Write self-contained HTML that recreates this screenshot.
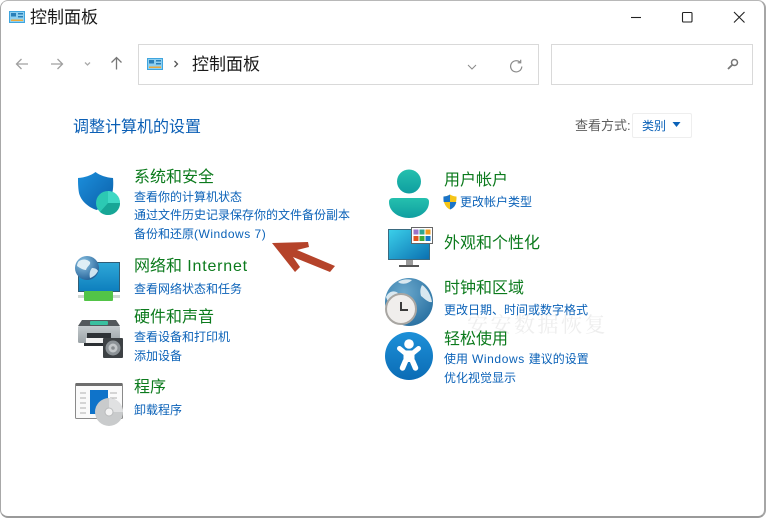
<!DOCTYPE html>
<html lang="zh-CN"><head><meta charset="utf-8"><title>控制面板</title>
<style>
html,body{margin:0;padding:0;width:766px;height:518px;overflow:hidden;background:#fff}
body{font-family:"Liberation Sans","Noto Sans CJK SC",sans-serif}
#w{position:absolute;left:0;top:0;width:763px;height:515px;background:#fff;border:1px solid #a8a8a8;border-top-color:#b8b8b8;border-bottom:2px solid #9a9a9a;border-right:2px solid #a6a6a6;border-radius:8px;overflow:hidden}
.t{position:absolute;white-space:nowrap;line-height:20px;height:20px}
.h{font-size:16px;color:#0b7a1c}
.l{font-size:12px;color:#0b62b8}
.s{letter-spacing:.5px}
.i{letter-spacing:.8px}
.m{letter-spacing:.6px}
.box{position:absolute;border:1px solid #d9d9d9;box-sizing:border-box;background:#fff}
svg{position:absolute;overflow:visible}
</style></head><body>
<div id="w"></div>

<svg style="left:9px;top:11px" width="16" height="12" viewBox="0 0 16 12"><rect x=".5" y=".5" width="15" height="11" fill="#8fd0f0" stroke="#3fa5de"/><rect x="2" y="2" width="5" height="3.500" fill="#2a7fb8"/><rect x="9" y="2" width="5" height="1.500" fill="#2a7fb8"/><rect x="9" y="5" width="5" height="1.500" fill="#2a7fb8"/><rect x="2" y="8.500" width="12" height="1.500" fill="#e8a93c"/></svg>
<div class="t" style="left:30px;top:8px;font-size:17px;color:#1a1a1a">控制面板</div>

<svg style="left:0;top:0" width="766" height="34" fill="none" stroke="#222" stroke-width="1.100"><path d="M631 17.500H641"/><rect x="682.500" y="12.500" width="9.500" height="9.500" rx="1"/><path d="M734 12L744.500 22.500M744.500 12L734 22.500"/></svg>

<svg style="left:0;top:50px" width="130" height="28" fill="none" stroke="#a0a0a0" stroke-width="1.300"><path d="M28 14H16.500M21.500 9L16.500 14L21.500 19"/><path d="M51 14H62.500M57.500 9L62.500 14L57.500 19"/><path d="M85 12.500L87.500 15L90 12.500" stroke="#aaa"/><path d="M116.500 19.500V7.500M111.500 12.500L116.500 7.500L121.500 12.500" stroke="#777"/></svg>

<div class="box" style="left:138px;top:44px;width:401px;height:41px"></div>
<svg style="left:147px;top:58px" width="16" height="12" viewBox="0 0 16 12"><rect x=".5" y=".5" width="15" height="11" fill="#8fd0f0" stroke="#3fa5de"/><rect x="2" y="2" width="5" height="3.500" fill="#2a7fb8"/><rect x="9" y="2" width="5" height="1.500" fill="#2a7fb8"/><rect x="9" y="5" width="5" height="1.500" fill="#2a7fb8"/><rect x="2" y="8.500" width="12" height="1.500" fill="#e8a93c"/></svg>
<svg style="left:172px;top:58px" width="8" height="12" fill="none" stroke="#555" stroke-width="1.300"><path d="M2.500 3L5.500 6L2.500 9"/></svg>
<div class="t" style="left:192px;top:55px;font-size:17px;color:#1a1a1a">控制面板</div>
<svg style="left:466px;top:62px" width="12" height="12" fill="none" stroke="#8a8a8a"><path d="M2 3L6 7L10 3"/></svg>
<svg style="left:509px;top:59px" width="14" height="14" fill="none" stroke="#8a8a8a" stroke-width="1.200"><path d="M11 3.200A5.600 5.600 0 1 0 12.800 7.500"/><path d="M11.700 .8V3.800H8.700"/></svg>

<div class="box" style="left:551px;top:44px;width:202px;height:41px"></div>
<svg style="left:726px;top:57px" width="14" height="14" fill="none" stroke="#777" stroke-width="1.500"><circle cx="8.500" cy="5.500" r="3"/><path d="M6.300 7.700L2 12" stroke-width="1.800"/></svg>

<div class="t" style="left:73px;top:118px;font-size:16px;color:#0b5fb5">调整计算机的设置</div>
<div class="t" style="left:575px;top:116px;font-size:13px;color:#5c5c5c">查看方式:</div>
<div class="box" style="left:632px;top:113px;width:60px;height:25px;border-color:#eeeeee;border-radius:2px"></div>
<div class="t" style="left:642px;top:116px;font-size:12px;color:#0b62b8">类别</div>
<svg style="left:672px;top:122px" width="10" height="6"><path d="M.5 0H8.500L4.500 5Z" fill="#0b62b8"/></svg>

<!-- security -->
<svg style="left:76px;top:171px" width="46" height="46" viewBox="0 0 46 46"><defs><linearGradient id="sh" x1="0" y1="0" x2="1" y2="1"><stop offset="0" stop-color="#1c8fdc"/><stop offset="1" stop-color="#0b5fa8"/></linearGradient></defs><path d="M19.500 1C24 4.500 30 6.500 37 7C37.500 12 37.500 20 35 27C32 33 26 37 20.500 39C12 36 5 30 3 22C2 16 2 11 2 7C9 6.500 15 4.500 19.500 1Z" fill="url(#sh)"/><circle cx="32" cy="32" r="12" fill="#2cc9b3"/><path d="M32 20A12 12 0 0 1 44 32H32Z" fill="#3fd8c4"/><path d="M32 32H44A12 12 0 0 1 24 41Z" fill="#17a696"/></svg>
<div class="t h" style="left:134px;top:168px">系统和安全</div>
<div class="t l" style="left:134px;top:187px">查看你的计算机状态</div>
<div class="t l" style="left:134px;top:205px">通过文件历史记录保存你的文件备份副本</div>
<div class="t l" style="left:134px;top:224px">备份和还原<span class="s">(Windows 7)</span></div>

<!-- arrow -->
<svg style="left:0;top:0" width="766" height="518"><path d="M272 243L308 242L309 247L297 250L335 266L330 272L293 257L300 267L295 272Z" fill="#b5432a"/></svg>

<!-- network -->
<svg style="left:74px;top:255px" width="48" height="48" viewBox="0 0 48 48"><defs><linearGradient id="sc" x1="0" y1="0" x2="0" y2="1"><stop offset="0" stop-color="#2fa8d8"/><stop offset="1" stop-color="#0d7ebd"/></linearGradient><radialGradient id="gl" cx=".35" cy=".3" r=".8"><stop offset="0" stop-color="#8fc6e6"/><stop offset="1" stop-color="#1c5a92"/></radialGradient></defs><rect x="4.500" y="7.500" width="41" height="29" fill="url(#sc)" stroke="#2f5d76"/><rect x="4" y="40" width="42" height="3" fill="#d0d8d4"/><rect x="10" y="36" width="29" height="10" rx="1" fill="#52c447"/><circle cx="13" cy="13" r="12" fill="url(#gl)"/><path d="M5 6C10 3 14 5 16 7C17 10 13 11 12 15C9 15 6 13 3 11C3 9 4 7 5 6Z" fill="#dfeef6"/><path d="M18 13C21 13 23 14 24 16C22 20 19 22 16 23C15 19 16 15 18 13Z" fill="#cfe4f0"/></svg>
<div class="t h" style="left:134px;top:257px">网络和<span class="i"> Internet</span></div>
<div class="t l" style="left:134px;top:279px">查看网络状态和任务</div>

<!-- hardware -->
<svg style="left:76px;top:318px" width="48" height="42" viewBox="0 0 48 42"><defs><linearGradient id="pr" x1="0" y1="0" x2="0" y2="1"><stop offset="0" stop-color="#c4cacd"/><stop offset="1" stop-color="#9aa2a6"/></linearGradient></defs><path d="M6 2H40L44 8H2Z" fill="#53585c"/><rect x="14" y="3" width="18" height="4" rx="1" fill="#39c0a0"/><rect x="2" y="8" width="42" height="17" rx="1.500" fill="url(#pr)"/><rect x="11" y="15" width="24" height="5" fill="#2e3236"/><rect x="10" y="20" width="26" height="5" fill="#f2f2f2"/><rect x="8" y="25" width="22" height="3" fill="#2b2f33"/><rect x="27" y="20" width="20" height="20" rx="1" fill="#3d4144"/><circle cx="37" cy="30" r="7.500" fill="#8c9296"/><circle cx="37" cy="30" r="4.500" fill="#c3c7c9"/><circle cx="37" cy="30" r="1.800" fill="#888d90"/></svg>
<div class="t h" style="left:134px;top:308px">硬件和声音</div>
<div class="t l" style="left:134px;top:327px">查看设备和打印机</div>
<div class="t l" style="left:134px;top:346px">添加设备</div>

<!-- programs -->
<svg style="left:74px;top:382px" width="50" height="44" viewBox="0 0 50 44"><rect x="1.500" y="1.500" width="47" height="35" rx="1" fill="#fafafa" stroke="#8a8a8a"/><rect x="2" y="1" width="46" height="3" fill="#6d6d6d"/><g stroke="#b0b0b0"><path d="M6 11H12M6 16H12M6 21H12M6 26H12M6 31H12M36 11H43M36 16H43"/></g><rect x="16" y="8" width="18" height="24" fill="#0f73c9"/><circle cx="35" cy="30" r="14" fill="#c9cbcc"/><path d="M35 16A14 14 0 0 1 49 30H35Z" fill="#e0e1e2"/><circle cx="35" cy="30" r="4" fill="#f4f4f4" stroke="#b9bbbc"/></svg>
<div class="t h" style="left:134px;top:378px">程序</div>
<div class="t l" style="left:134px;top:400px">卸载程序</div>

<!-- user -->
<svg style="left:388px;top:168px" width="44" height="50" viewBox="0 0 44 50"><defs><linearGradient id="us" x1="0" y1="0" x2="0" y2="1"><stop offset="0" stop-color="#25c0ae"/><stop offset="1" stop-color="#0f9ea0"/></linearGradient></defs><circle cx="21" cy="13.500" r="12" fill="url(#us)"/><path d="M5 30H37Q41 30 41 34C41 44 31 50 21 50C11 50 1 44 1 34Q1 30 5 30Z" fill="url(#us)"/></svg>
<div class="t h" style="left:444px;top:171px">用户帐户</div>
<svg style="left:443px;top:194px" width="14" height="16" viewBox="0 0 14 16"><path d="M7 .5C9 1.800 11.500 2.500 13.500 2.500C13.800 8 12 13 7 15.500C2 13 .2 8 .5 2.500C2.500 2.500 5 1.800 7 .5Z" fill="#f5c518"/><path d="M7 .5V8H.7C.4 6 .4 4 .5 2.500C2.500 2.500 5 1.800 7 .5Z" fill="#1a74c9"/><path d="M7 8H13.300C12.700 11 11 14 7 15.500Z" fill="#1a74c9"/></svg>
<div class="t l" style="left:460px;top:192px">更改帐户类型</div>

<!-- appearance -->
<svg style="left:388px;top:226px" width="46" height="44" viewBox="0 0 46 44"><defs><linearGradient id="mo" x1="0" y1="0" x2="1" y2="1"><stop offset="0" stop-color="#3bd0ea"/><stop offset="1" stop-color="#0a6fb0"/></linearGradient></defs><rect x=".5" y="3.500" width="41" height="30" fill="url(#mo)" stroke="#3a6a80"/><rect x="18" y="34" width="7" height="5" fill="#9a9a9a"/><rect x="11" y="39" width="20" height="2" fill="#555"/><rect x="23.500" y="1.500" width="21" height="16" fill="#fff" stroke="#666"/><rect x="25.500" y="3.500" width="5" height="5" fill="#9a73c9"/><rect x="31.500" y="3.500" width="5" height="5" fill="#2fa58f"/><rect x="37.500" y="3.500" width="5" height="5" fill="#f09a1e"/><rect x="25.500" y="10" width="5" height="5" fill="#e0531e"/><rect x="31.500" y="10" width="5" height="5" fill="#3faa3a"/><rect x="37.500" y="10" width="5" height="5" fill="#1277c9"/></svg>
<div class="t h" style="left:444px;top:234px">外观和个性化</div>

<div class="t" style="left:467px;top:314px;font-size:21px;color:#eeeeee;font-family:'Noto Serif CJK SC',serif;letter-spacing:2.500px">安安数据恢复</div>

<!-- clock -->
<svg style="left:384px;top:278px" width="50" height="50" viewBox="0 0 50 50"><defs><radialGradient id="ck" cx=".4" cy=".3" r=".8"><stop offset="0" stop-color="#6aa8cc"/><stop offset="1" stop-color="#246c9e"/></radialGradient></defs><circle cx="25" cy="24" r="24" fill="url(#ck)"/><path d="M2 19C5 13 10 12 14 15C11 18 7 18 4 24ZM38 7C43 10 47 17 48 24C44 25 40 20 37 18C36 14 36 11 38 7ZM14 4C18 1 24 1 28 2C24 6 18 7 14 4Z" fill="#d9e8f0"/><circle cx="17" cy="31" r="15" fill="#f0eeec" stroke="#a8a6a2" stroke-width="2"/><path d="M17 24V32H24" fill="none" stroke="#3a3a3a" stroke-width="2"/></svg>
<div class="t h" style="left:444px;top:279px">时钟和区域</div>
<div class="t l" style="left:444px;top:300px">更改日期、时间或数字格式</div>

<!-- ease -->
<svg style="left:385px;top:332px" width="48" height="48" viewBox="0 0 48 48"><defs><linearGradient id="ea" x1="0" y1="0" x2="0" y2="1"><stop offset="0" stop-color="#1d90d8"/><stop offset="1" stop-color="#0b6cb5"/></linearGradient></defs><circle cx="24" cy="24" r="24" fill="url(#ea)"/><circle cx="24" cy="12" r="4.800" fill="#fff"/><path d="M14.500 16.500L20 21H28L33.500 16.500" fill="none" stroke="#fff" stroke-width="5" stroke-linecap="round" stroke-linejoin="round"/><rect x="18.500" y="20" width="11" height="10" fill="#fff"/><path d="M20.500 29L17.500 36M27.500 29L30.500 36" fill="none" stroke="#fff" stroke-width="5.500" stroke-linecap="round"/></svg>
<div class="t h" style="left:444px;top:330px">轻松使用</div>
<div class="t l" style="left:444px;top:349px">使用<span class="m"> Windows </span>建议的设置</div>
<div class="t l" style="left:444px;top:368px">优化视觉显示</div>
</body></html>
